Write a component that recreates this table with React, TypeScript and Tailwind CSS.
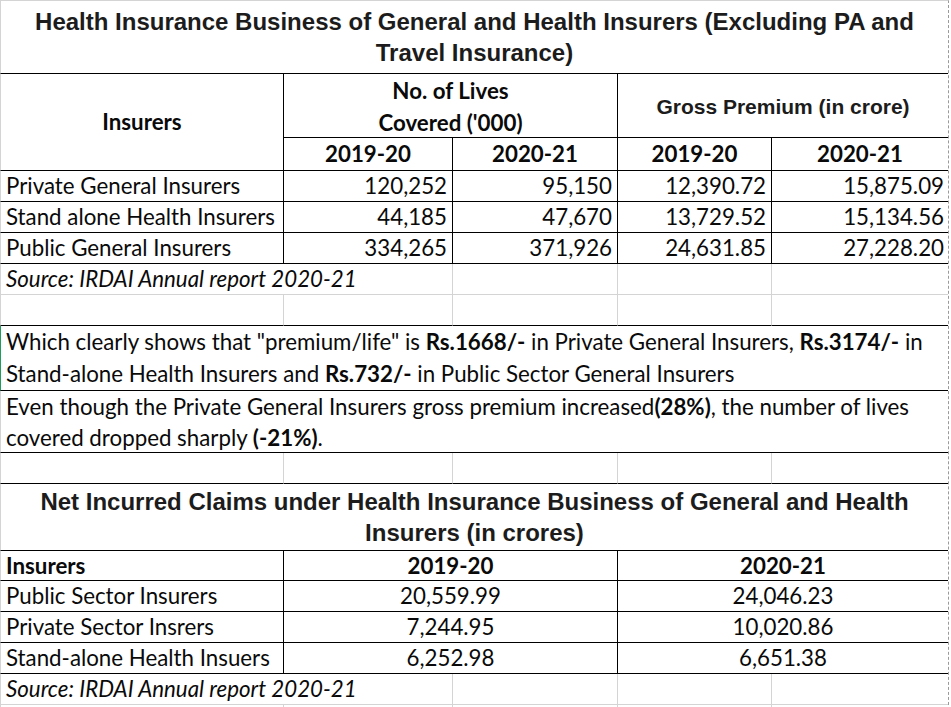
import React from 'react';

const BLK = 'border-black';
const GRY = 'border-[#d4d4d4]';

const topRows = [
  ['Private General Insurers', '120,252', '95,150', '12,390.72', '15,875.09'],
  ['Stand alone Health Insurers', '44,185', '47,670', '13,729.52', '15,134.56'],
  ['Public General Insurers', '334,265', '371,926', '24,631.85', '27,228.20'],
];

const claimRows = [
  ['Public Sector Insurers', '20,559.99', '24,046.23'],
  ['Private Sector Insrers', '7,244.95', '10,020.86'],
  ['Stand-alone Health Insuers', '6,252.98', '6,651.38'],
];

function EmptyRow({ bottom }: { bottom: string }) {
  return (
    <>
      <div className={`border-l border-r border-b ${GRY} ${bottom}`} />
      <div className={`border-r border-b ${GRY} ${bottom}`} />
      <div className={`border-r border-b ${GRY} ${bottom}`} />
      <div className={`border-r border-b ${GRY} ${bottom}`} />
      <div className={`border-b ${bottom}`} />
    </>
  );
}

function SourceRow() {
  return (
    <>
      <div className={`col-span-2 flex items-center border-l border-r border-b ${GRY} px-[5px] italic whitespace-nowrap`}>
        Source: IRDAI Annual report 2020-21
      </div>
      <div className={`border-r border-b ${GRY}`} />
      <div className={`border-r border-b ${GRY}`} />
      <div className={`border-b ${GRY}`} />
    </>
  );
}

export default function App() {
  return (
    <div className="h-[707px] w-[951px] overflow-hidden bg-white">
      <div
        className={`grid w-[949px] grid-cols-[284px_169px_165px_154px_176px] grid-rows-[73px_64px_33px_31px_31px_31px_31px_31px_65px_62px_31px_67px_30px_31px_31px_31px_31px_10px] border-t border-r border-t-[#d4d4d4] border-r-[#9a9a9a] border-dashed text-[22.3px] text-[#0a0a0a] [font-family:Lato,sans-serif]`}
        style={{ borderTopStyle: 'solid' }}
      >
        {/* first table title */}
        <div
          className={`col-span-5 flex items-center justify-center border-l border-b ${GRY} border-b-black text-center text-[24px] leading-[31px] font-bold text-[#1c1c1c] [font-family:'Liberation_Sans',Arial,sans-serif]`}
        >
          Health Insurance Business of General and Health Insurers (Excluding PA and
          <br />
          Travel Insurance)
        </div>

        {/* header */}
        <div className={`row-span-2 flex items-center justify-center border-l border-r border-b ${GRY} border-r-black border-b-black font-bold`}>
          Insurers
        </div>
        <div className={`col-span-2 flex items-center justify-center border-r border-b ${BLK} pt-[3px] text-center leading-[32px] font-bold`}>
          No. of Lives
          <br />
          Covered ('000)
        </div>
        <div
          className={`col-span-2 flex items-center justify-center border-b ${BLK} pt-[2px] text-[21px] font-bold text-[#1c1c1c] [font-family:'Liberation_Sans',Arial,sans-serif]`}
        >
          Gross Premium (in crore)
        </div>
        {['2019-20', '2020-21', '2019-20'].map((y, i) => (
          <div key={i} className={`flex items-center justify-center border-r border-b ${BLK} font-bold`}>
            {y}
          </div>
        ))}
        <div className={`flex items-center justify-center border-b ${BLK} font-bold`}>2020-21</div>

        {/* data */}
        {topRows.map(r => (
          <React.Fragment key={r[0]}>
            <div className={`flex items-center border-l border-r border-b ${GRY} border-r-black border-b-black px-[5px] whitespace-nowrap`}>
              {r[0]}
            </div>
            {r.slice(1, 4).map((v, i) => (
              <div key={i} className={`flex items-center justify-end border-r border-b ${BLK} px-[5px]`}>
                {v}
              </div>
            ))}
            <div className={`flex items-center justify-end border-b ${BLK} px-[4px]`}>{r[4]}</div>
          </React.Fragment>
        ))}

        <SourceRow />
        <EmptyRow bottom="border-b-black" />

        {/* notes */}
        <div className={`col-span-5 border-l border-b border-l-[#1e9e5a] border-b-black px-[5px] leading-[32px] whitespace-nowrap`}>
          Which clearly shows that "premium/life" is <b>Rs.1668/-</b> in Private General Insurers, <b>Rs.3174/-</b> in
          <br />
          Stand-alone Health Insurers and <b>Rs.732/-</b> in Public Sector General Insurers
        </div>
        <div className={`col-span-5 border-l border-b ${GRY} border-b-black px-[5px] leading-[31px] whitespace-nowrap`}>
          Even though the Private General Insurers gross premium increased<b>(28%)</b>, the number of lives
          <br />
          covered dropped sharply <b>(-21%)</b>.
        </div>

        <EmptyRow bottom="border-b-black" />

        {/* second table title */}
        <div
          className={`col-span-5 flex items-center justify-center border-l border-b ${GRY} border-b-black text-center text-[24px] leading-[31px] font-bold text-[#1c1c1c] [font-family:'Liberation_Sans',Arial,sans-serif]`}
        >
          Net Incurred Claims under Health Insurance Business of General and Health
          <br />
          Insurers (in crores)
        </div>

        <div className={`flex items-center border-l border-r border-b ${GRY} border-r-black border-b-black px-[5px] font-bold`}>
          Insurers
        </div>
        <div className={`col-span-2 flex items-center justify-center border-r border-b ${BLK} font-bold`}>2019-20</div>
        <div className={`col-span-2 flex items-center justify-center border-b ${BLK} font-bold`}>2020-21</div>

        {claimRows.map(r => (
          <React.Fragment key={r[0]}>
            <div className={`flex items-center border-l border-r border-b ${GRY} border-r-black border-b-black px-[5px] whitespace-nowrap`}>
              {r[0]}
            </div>
            <div className={`col-span-2 flex items-center justify-center border-r border-b ${BLK}`}>{r[1]}</div>
            <div className={`col-span-2 flex items-center justify-center border-b ${BLK}`}>{r[2]}</div>
          </React.Fragment>
        ))}

        <SourceRow />
        <EmptyRow bottom="border-b-[#d4d4d4]" />
      </div>
    </div>
  );
}
